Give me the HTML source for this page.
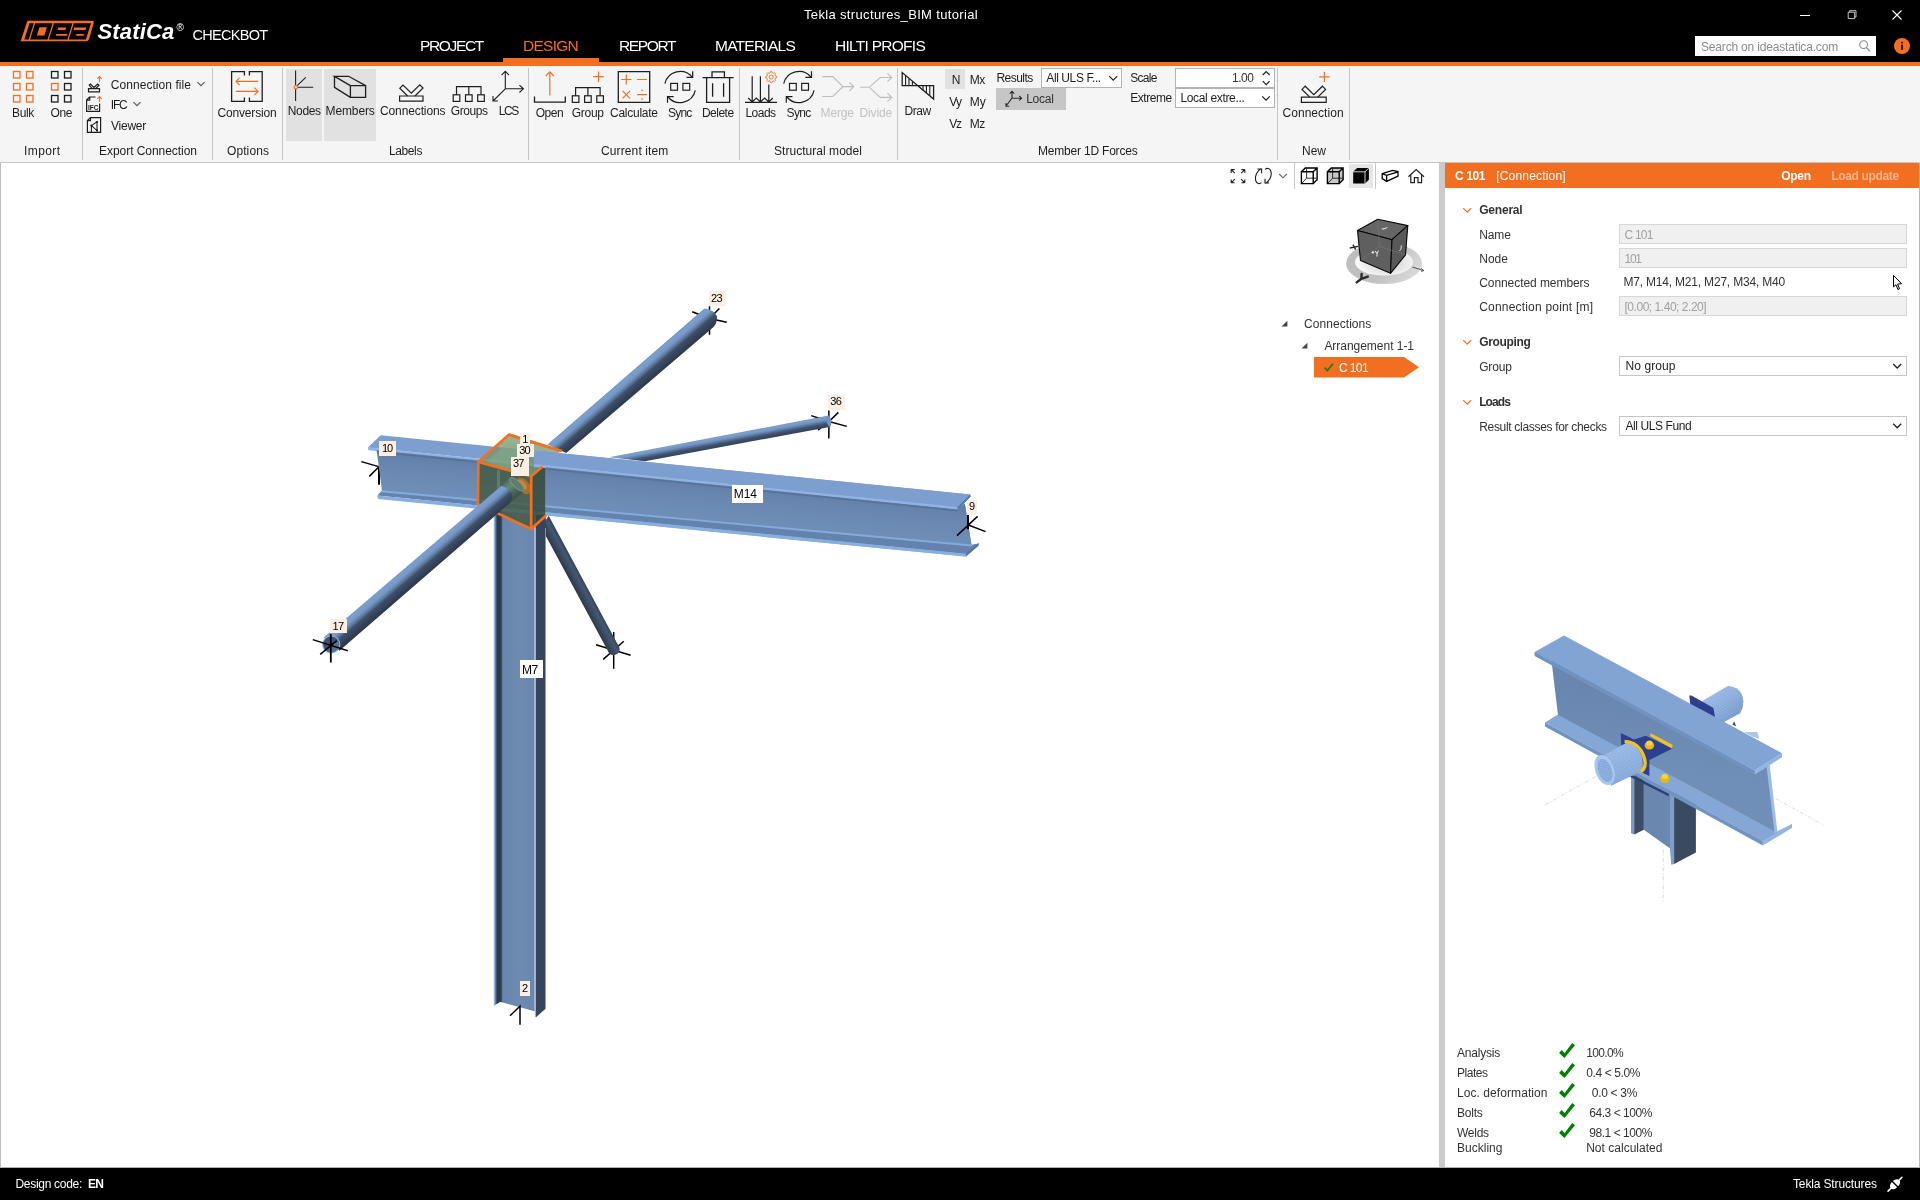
<!DOCTYPE html>
<html><head><meta charset="utf-8"><title>IDEA StatiCa Checkbot</title>
<style>
html,body{margin:0;padding:0;}
body{width:1920px;height:1200px;position:relative;overflow:hidden;background:#fff;font-family:"Liberation Sans",sans-serif;}
.abs{position:absolute;}
.t{position:absolute;white-space:pre;font-family:"Liberation Sans",sans-serif;}
</style></head>
<body>
<div id="root" style="position:absolute;left:0;top:0;width:1920px;height:1200px;will-change:transform">
<!-- header -->
<div class="abs" style="left:0;top:0;width:1920px;height:62px;background:#000"></div>
<div class="abs" style="left:0;top:62px;width:1920px;height:4px;background:#f26e21"></div>
<div class="abs" style="left:503px;top:58px;width:96px;height:5px;background:#f26e21"></div>
<span class="t" style="left:804.00px;top:7px;font-size:13px;line-height:15px;letter-spacing:0.345px;color:#ffffff;">Tekla structures_BIM tutorial</span>
<svg class="abs" style="left:0;top:0" width="300" height="62" viewBox="0 0 300 62">
<path d="M27.4,20.7 H92 Q94.4,20.7 93.7,23 L89,39.2 Q88.4,41.3 86.2,41.3 H20.6 Z" fill="#f26e21"/>
<polygon points="29.50,23.30 33.80,23.30 28.75,39.50 24.45,39.50" fill="#000"/>
<polygon points="35.10,23.30 52.60,23.30 47.55,39.50 30.05,39.50" fill="#000"/>
<polygon points="53.90,23.30 72.50,23.30 67.45,39.50 48.85,39.50" fill="#000"/>
<polygon points="73.80,23.30 91.00,23.30 85.95,39.50 68.75,39.50" fill="#000"/>
<polygon points="39.45,27.30 46.95,27.30 44.36,35.60 36.86,35.60" fill="#f26e21"/>
<polygon points="58.26,27.60 66.26,27.60 65.54,29.90 57.54,29.90" fill="#f26e21"/>
<polygon points="56.29,33.90 67.59,33.90 67.00,35.80 55.70,35.80" fill="#f26e21"/>
<polygon points="74.26,27.60 86.36,27.60 85.64,29.90 73.54,29.90" fill="#f26e21"/>
<polygon points="76.49,33.90 83.99,33.90 83.40,35.80 75.90,35.80" fill="#f26e21"/>
</svg>
<span class="t" style="left:97.50px;top:19px;font-size:22px;line-height:25px;letter-spacing:0.171px;color:#ffffff;font-weight:bold;font-style:italic;">StatiCa</span>
<span class="t" style="left:176.50px;top:22px;font-size:10px;line-height:11px;letter-spacing:0.632px;color:#ffffff;">®</span>
<span class="t" style="left:192.50px;top:27px;font-size:14.5px;line-height:16px;letter-spacing:-0.696px;color:#ffffff;">CHECKBOT</span>
<span class="t" style="left:420.00px;top:37px;font-size:15.5px;line-height:17px;letter-spacing:-1.334px;color:#fff;">PROJECT</span>
<span class="t" style="left:523.00px;top:37px;font-size:15.5px;line-height:17px;letter-spacing:-0.738px;color:#f26e21;">DESIGN</span>
<span class="t" style="left:619.00px;top:37px;font-size:15.5px;line-height:17px;letter-spacing:-1.385px;color:#fff;">REPORT</span>
<span class="t" style="left:715.00px;top:37px;font-size:15.5px;line-height:17px;letter-spacing:-0.745px;color:#fff;">MATERIALS</span>
<span class="t" style="left:835.00px;top:37px;font-size:15.5px;line-height:17px;letter-spacing:-0.729px;color:#fff;">HILTI PROFIS</span>
<div class="abs" style="left:1695px;top:36px;width:181px;height:20px;background:#fff"></div>
<span class="t" style="left:1701.00px;top:40px;font-size:12px;line-height:14px;letter-spacing:-0.177px;color:#8a8a8a;">Search on ideastatica.com</span>
<svg class="abs" style="left:1856px;top:38px" width="18" height="16" viewBox="0 0 18 16"><circle cx="7.6" cy="6.6" r="3.9" fill="none" stroke="#8a8a8a" stroke-width="1.1"/><path d="M10.4,9.6 L14,13.4" stroke="#8a8a8a" stroke-width="1.3" fill="none"/></svg>
<svg class="abs" style="left:1892px;top:36px" width="20" height="20" viewBox="0 0 20 20"><circle cx="10" cy="10" r="8" fill="#f26e21"/><rect x="9.2" y="8.6" width="1.7" height="5.2" fill="#1a0a00"/><rect x="9.2" y="5.8" width="1.7" height="1.7" fill="#1a0a00"/></svg>
<svg class="abs" style="left:1790px;top:0" width="130" height="30" viewBox="0 0 130 30">
<path d="M10,15.5 H20" stroke="#fff" stroke-width="1" fill="none"/>
<path d="M58.2,12.2 H64.6 V18.6 H58.2 Z M59.6,12.2 V10.7 H66 V17.1 H64.6" stroke="#d8d8d8" stroke-width="0.9" fill="none"/>
<path d="M102.5,10.5 L111.5,19.5 M111.5,10.5 L102.5,19.5" stroke="#fff" stroke-width="1.1" fill="none"/>
</svg>
<!-- ribbon -->
<div class="abs" style="left:0;top:66px;width:1920px;height:96px;background:#f5f5f5"></div>
<div class="abs" style="left:0;top:162px;width:1920px;height:1px;background:#c6c6c6"></div>
<div class="abs" style="left:82px;top:68px;width:1px;height:92px;background:#c4c4c4"></div>
<div class="abs" style="left:212px;top:68px;width:1px;height:92px;background:#c4c4c4"></div>
<div class="abs" style="left:282px;top:68px;width:1px;height:92px;background:#c4c4c4"></div>
<div class="abs" style="left:528px;top:68px;width:1px;height:92px;background:#c4c4c4"></div>
<div class="abs" style="left:739px;top:68px;width:1px;height:92px;background:#c4c4c4"></div>
<div class="abs" style="left:897px;top:68px;width:1px;height:92px;background:#c4c4c4"></div>
<div class="abs" style="left:1277px;top:68px;width:1px;height:92px;background:#c4c4c4"></div>
<div class="abs" style="left:1349px;top:68px;width:1px;height:92px;background:#c4c4c4"></div>
<div class="abs" style="left:286px;top:69px;width:36px;height:72px;background:#e1e1e1"></div>
<div class="abs" style="left:324px;top:69px;width:52px;height:72px;background:#e1e1e1"></div>
<div class="abs" style="left:945px;top:69px;width:20px;height:20px;background:#e1e1e1"></div>
<div class="abs" style="left:996px;top:88px;width:70px;height:22px;background:#c6c6c6"></div>
<div class="abs" style="left:1041px;top:68px;width:81px;height:20px;background:#fff;border:1px solid #b4b4b4;box-sizing:border-box"></div>
<div class="abs" style="left:1175px;top:68px;width:100px;height:20px;background:#fff;border:1px solid #b4b4b4;box-sizing:border-box"></div>
<div class="abs" style="left:1175px;top:88px;width:100px;height:20px;background:#fff;border:1px solid #b4b4b4;box-sizing:border-box"></div>
<svg class="abs" style="left:0;top:0" width="1400" height="163" viewBox="0 0 1400 163">
<rect x="13.50" y="71.50" width="6.50" height="6.50" fill="none" stroke="#f26e21" stroke-width="1.3"/>
<rect x="13.50" y="83.50" width="6.50" height="6.50" fill="none" stroke="#f26e21" stroke-width="1.3"/>
<rect x="13.50" y="95.50" width="6.50" height="6.50" fill="none" stroke="#f26e21" stroke-width="1.3"/>
<rect x="26.50" y="71.50" width="6.50" height="6.50" fill="none" stroke="#f26e21" stroke-width="1.3"/>
<rect x="26.50" y="83.50" width="6.50" height="6.50" fill="none" stroke="#f26e21" stroke-width="1.3"/>
<rect x="26.50" y="95.50" width="6.50" height="6.50" fill="none" stroke="#f26e21" stroke-width="1.3"/>
<rect x="51.50" y="71.50" width="6.50" height="6.50" fill="none" stroke="#1e1e1e" stroke-width="1.3"/>
<rect x="51.50" y="83.50" width="6.50" height="6.50" fill="none" stroke="#f26e21" stroke-width="1.3"/>
<rect x="51.50" y="95.50" width="6.50" height="6.50" fill="none" stroke="#1e1e1e" stroke-width="1.3"/>
<rect x="64.50" y="71.50" width="6.50" height="6.50" fill="none" stroke="#1e1e1e" stroke-width="1.3"/>
<rect x="64.50" y="83.50" width="6.50" height="6.50" fill="none" stroke="#1e1e1e" stroke-width="1.3"/>
<rect x="64.50" y="95.50" width="6.50" height="6.50" fill="none" stroke="#1e1e1e" stroke-width="1.3"/>
<path d="M88.5,88.6 H99.5 V91.8 H88.5 Z" fill="none" stroke="#1e1e1e" stroke-width="1.2" />
<path d="M89,85.2 L90.4,84 L94,87.4 L97.6,84 L99,85.2 L95.6,88.6 M89,85.2 L92.4,88.6" fill="none" stroke="#1e1e1e" stroke-width="1.2" />
<path d="M99.5,82.2 V76.6 M97.3,78.8 L99.5,76.6 L101.7,78.8" fill="none" stroke="#f26e21" stroke-width="1.1" />
<path d="M95.5,97 H89.5 L86.6,100 V111.4 H99.6 V103.5 M89.7,97.2 V100.2 H86.8" fill="none" stroke="#1e1e1e" stroke-width="1.2" />
<path d="M99.5,102 V96.6 M97.3,98.8 L99.5,96.6 L101.7,98.8" fill="none" stroke="#f26e21" stroke-width="1.1" />
<text x="88" y="109.8" font-family="Liberation Sans" font-weight="bold" font-size="7" fill="#1e1e1e" textLength="10.6" lengthAdjust="spacingAndGlyphs">IFC</text>
<path d="M90.4,117.6 H100.6 V132.4 H87.4 V120.6 Z M90.5,117.8 V120.7 H87.6" fill="none" stroke="#1e1e1e" stroke-width="1.2" />
<path d="M91.4,125.6 L97,121.8 V130.6 Z M91.4,125.6 V132" fill="none" stroke="#1e1e1e" stroke-width="1.1" />
<circle cx="91.4" cy="125.6" r="1.1" fill="#1e1e1e"/><circle cx="97" cy="122" r="1.1" fill="#1e1e1e"/><circle cx="97" cy="130.4" r="1.1" fill="#1e1e1e"/>
<path d="M197.4,82.2 L201,85.7 L204.6,82.2" fill="none" stroke="#555" stroke-width="1.1" />
<path d="M133.4,102.2 L137,105.7 L140.6,102.2" fill="none" stroke="#555" stroke-width="1.1" />
<path d="M244.4,75.6 V71.6 H231.6 V101.4 H244.4 V97.4" fill="none" stroke="#1e1e1e" stroke-width="1.3" />
<path d="M249.4,75.6 V71.6 H262.2 V101.4 H249.4 V97.4" fill="none" stroke="#1e1e1e" stroke-width="1.3" />
<path d="M258.2,81.4 H236 M239.6,77.6 L236,81.4 L239.6,85.2" fill="none" stroke="#f26e21" stroke-width="1.1" />
<path d="M235.8,91.4 H258 M254.4,87.6 L258,91.4 L254.4,95.2" fill="none" stroke="#f26e21" stroke-width="1.1" />
<path d="M295.6,70.4 V85.3 M295.6,89.1 V101 M297.6,87.2 H313.2 M297.2,85.6 L305.8,77.4" fill="none" stroke="#1e1e1e" stroke-width="1.1" />
<circle cx="295.8" cy="87.2" r="1.7" fill="none" stroke="#f26e21" stroke-width="1.1"/>
<path d="M350.4,85.6 H365.6 V97.4 H350.4 Z M350.4,85.6 L334.5,76.3 H348.6 L365.6,85.6 M334.5,76.3 V87.4 L350.4,97.4" fill="none" stroke="#1e1e1e" stroke-width="1.3" />
<path d="M399.6,96 H423 V101.2 H399.6 Z" fill="none" stroke="#1e1e1e" stroke-width="1.2" />
<path d="M407.6,96 L399.8,88.2 L403,85 L411.3,93.2 L419.8,84.8 L423,88 L415,96" fill="none" stroke="#1e1e1e" stroke-width="1.2" />
<rect x="453.20" y="94.80" width="6.60" height="6.60" fill="none" stroke="#1e1e1e" stroke-width="1.2"/><rect x="465.50" y="94.80" width="6.60" height="6.60" fill="none" stroke="#1e1e1e" stroke-width="1.2"/><rect x="477.70" y="94.80" width="6.60" height="6.60" fill="none" stroke="#1e1e1e" stroke-width="1.2"/><path d="M456.5,94.8 V86.6 H481.0 V94.8 M468.8,86.6 V94.8" fill="none" stroke="#1e1e1e" stroke-width="1.2" />
<path d="M505.3,88.8 V71.4 M501.6,75.2 L505.3,71.2 L509,75.2 M505.3,88.8 H523.2 M519.4,85.1 L523.4,88.8 L519.4,92.5 M505.3,88.8 L493,101 M493,96 V101 H498" fill="none" stroke="#1e1e1e" stroke-width="1.1" />
<path d="M534.5,96.4 V102.2 H565.3 V96.4" fill="none" stroke="#1e1e1e" stroke-width="1.3" />
<path d="M549.8,95.6 V72 M545.8,76 L549.8,71.8 L553.8,76" fill="none" stroke="#f26e21" stroke-width="1.2" />
<rect x="572.30" y="95.80" width="6.60" height="6.60" fill="none" stroke="#1e1e1e" stroke-width="1.2"/><rect x="584.60" y="95.80" width="6.60" height="6.60" fill="none" stroke="#1e1e1e" stroke-width="1.2"/><rect x="596.80" y="95.80" width="6.60" height="6.60" fill="none" stroke="#1e1e1e" stroke-width="1.2"/><path d="M575.6,95.8 V87.6 H600.1 V95.8 M587.9,87.6 V95.8" fill="none" stroke="#1e1e1e" stroke-width="1.2" />
<path d="M593.2,76.7 H603.8 M598.5,71.4 V82" fill="none" stroke="#f26e21" stroke-width="1.2" />
<path d="M618.3,71.6 H649.7 V102.3 H618.3 Z" fill="none" stroke="#1e1e1e" stroke-width="1.3" />
<path d="M621.2,79.5 H631.4 M626.3,74.4 V84.6 M637,79.5 H647 M622.6,90.8 L630,98.4 M630,90.8 L622.6,98.4 M637,94.6 H647" fill="none" stroke="#f26e21" stroke-width="1.2" />
<rect x="641.3" y="89.6" width="1.5" height="1.5" fill="#f26e21"/><rect x="641.3" y="98.2" width="1.5" height="1.5" fill="#f26e21"/>
<path d="M664.90,83.60 A15.60,15.60 0 0 1 692.10,77.00" fill="none" stroke="#1e1e1e" stroke-width="1.2" /><path d="M692.70,71.20 V77.40 H686.50" fill="none" stroke="#1e1e1e" stroke-width="1.2" /><path d="M695.30,90.40 A15.60,15.60 0 0 1 668.10,97.00" fill="none" stroke="#1e1e1e" stroke-width="1.2" /><path d="M667.50,102.80 V96.60 H673.70" fill="none" stroke="#1e1e1e" stroke-width="1.2" /><rect x="670.70" y="83.40" width="6.80" height="6.80" fill="none" stroke="#1e1e1e" stroke-width="1.2"/><rect x="682.90" y="83.40" width="6.80" height="6.80" fill="none" stroke="#1e1e1e" stroke-width="1.2"/>
<path d="M702.6,77.6 H733.6 M712,77.6 V71.8 H724.4 V77.6 M706.6,77.6 V102.3 H729.6 V77.6 M712.6,83.2 V96.8 M723.6,83.2 V96.8" fill="none" stroke="#1e1e1e" stroke-width="1.3" />
<path d="M745,102.4 H777 M752.2,76.2 V102 M760.4,76.2 V102 M768.8,84.4 V102 M748.2,98 L752.2,102 L756.3,98 L760.4,102 L764.6,98 L768.8,102 L772.8,98" fill="none" stroke="#1e1e1e" stroke-width="1.2" />
<polygon points="770.59,71.53 771.81,71.53 772.40,72.97 773.27,73.33 774.70,72.73 775.57,73.60 774.97,75.03 775.33,75.90 776.77,76.49 776.77,77.71 775.33,78.30 774.97,79.17 775.57,80.60 774.70,81.47 773.27,80.87 772.40,81.23 771.81,82.67 770.59,82.67 770.00,81.23 769.13,80.87 767.70,81.47 766.83,80.60 767.43,79.17 767.07,78.30 765.63,77.71 765.63,76.49 767.07,75.90 767.43,75.03 766.83,73.60 767.70,72.73 769.13,73.33 770.00,72.97" fill="none" stroke="#f26e21" stroke-width="0.9"/>
<circle cx="771.2" cy="77.1" r="2" fill="none" stroke="#f26e21" stroke-width="0.9"/>
<path d="M783.70,83.60 A15.60,15.60 0 0 1 810.90,77.00" fill="none" stroke="#1e1e1e" stroke-width="1.2" /><path d="M811.50,71.20 V77.40 H805.30" fill="none" stroke="#1e1e1e" stroke-width="1.2" /><path d="M814.10,90.40 A15.60,15.60 0 0 1 786.90,97.00" fill="none" stroke="#1e1e1e" stroke-width="1.2" /><path d="M786.30,102.80 V96.60 H792.50" fill="none" stroke="#1e1e1e" stroke-width="1.2" /><rect x="789.50" y="83.40" width="6.80" height="6.80" fill="none" stroke="#1e1e1e" stroke-width="1.2"/><rect x="801.70" y="83.40" width="6.80" height="6.80" fill="none" stroke="#1e1e1e" stroke-width="1.2"/>
<path d="M822.2,76.6 H832.8 L842.9,86.6 M822.2,96.5 H832.8 L842.9,86.6 H853.6 M849.4,82.4 L853.8,86.6 L849.4,90.8" fill="none" stroke="#bdbdbd" stroke-width="1.1" />
<path d="M860.2,87.3 H869.4 L880.2,77.5 H891.6 M887.4,73.3 L891.8,77.5 L887.4,81.7 M869.4,87.3 L880.2,97.4 H891.6 M887.4,93.2 L891.8,97.4 L887.4,101.6" fill="none" stroke="#bdbdbd" stroke-width="1.1" />
<path d="M902.2,72.6 V85.6 H933.6 V99 L902.2,72.6 Z" fill="none" stroke="#1e1e1e" stroke-width="1.3" />
<path d="M905.6,76 V85.4 M909,79 V85.4 M912.4,82 V85.4 M923,90.4 V85.8 M926.4,93.2 V85.8 M929.8,96 V85.8" fill="none" stroke="#1e1e1e" stroke-width="1.1" />
<path d="M1012,98.2 V91.4 M1009.8,93.6 L1012,91.2 L1014.2,93.6 M1012,98.2 H1021.4 M1019.2,96 L1021.6,98.2 L1019.2,100.4 M1012,98.2 L1006,106 M1006,103 V106.2 H1009.2" fill="none" stroke="#2a2a2a" stroke-width="1.1" />
<path d="M1109.2,76.2 L1113.2,80.2 L1117.2,76.2" fill="none" stroke="#1e1e1e" stroke-width="1.2" />
<path d="M1262.2,96.4 L1266,100.2 L1269.8,96.4" fill="none" stroke="#1e1e1e" stroke-width="1.2" />
<path d="M1262.8,75 L1266.2,71.6 L1269.6,75 M1262.8,81.2 L1266.2,84.6 L1269.6,81.2" fill="none" stroke="#1e1e1e" stroke-width="1.2" />
<path d="M1301.4,97.2 H1326.2 V102.4 H1301.4 Z" fill="none" stroke="#1e1e1e" stroke-width="1.2" />
<path d="M1309.8,97.2 L1302,89.4 L1305.2,86.2 L1313.8,94.6 L1322.4,86.2 L1325.6,89.4 L1317.8,97.2" fill="none" stroke="#1e1e1e" stroke-width="1.2" />
<path d="M1319.2,76.9 H1329.6 M1324.4,71.7 V82.1" fill="none" stroke="#f26e21" stroke-width="1.2" />
</svg>
<span class="t" style="left:12.00px;top:106px;font-size:12px;line-height:14px;letter-spacing:-0.336px;color:#1e1e1e;">Bulk</span>
<span class="t" style="left:50.50px;top:106px;font-size:12px;line-height:14px;letter-spacing:-0.394px;color:#1e1e1e;">One</span>
<span class="t" style="left:24.00px;top:144px;font-size:12px;line-height:14px;letter-spacing:0.415px;color:#1e1e1e;">Import</span>
<span class="t" style="left:110.80px;top:78px;font-size:12px;line-height:14px;letter-spacing:0.054px;color:#1e1e1e;">Connection file</span>
<span class="t" style="left:110.80px;top:98px;font-size:12px;line-height:14px;letter-spacing:-1.210px;color:#1e1e1e;">IFC</span>
<span class="t" style="left:111.00px;top:119px;font-size:12px;line-height:14px;letter-spacing:-0.244px;color:#1e1e1e;">Viewer</span>
<span class="t" style="left:99.00px;top:144px;font-size:12px;line-height:14px;letter-spacing:-0.043px;color:#1e1e1e;">Export Connection</span>
<span class="t" style="left:217.60px;top:106px;font-size:12px;line-height:14px;letter-spacing:-0.190px;color:#1e1e1e;">Conversion</span>
<span class="t" style="left:227.00px;top:144px;font-size:12px;line-height:14px;letter-spacing:0.092px;color:#1e1e1e;">Options</span>
<span class="t" style="left:287.80px;top:104px;font-size:12px;line-height:14px;letter-spacing:-0.378px;color:#1e1e1e;">Nodes</span>
<span class="t" style="left:325.60px;top:104px;font-size:12px;line-height:14px;letter-spacing:-0.130px;color:#1e1e1e;">Members</span>
<span class="t" style="left:380.00px;top:104px;font-size:12px;line-height:14px;letter-spacing:-0.119px;color:#1e1e1e;">Connections</span>
<span class="t" style="left:450.80px;top:104px;font-size:12px;line-height:14px;letter-spacing:-0.409px;color:#1e1e1e;">Groups</span>
<span class="t" style="left:498.80px;top:104px;font-size:12px;line-height:14px;letter-spacing:-1.382px;color:#1e1e1e;">LCS</span>
<span class="t" style="left:389.00px;top:144px;font-size:12px;line-height:14px;letter-spacing:-0.394px;color:#1e1e1e;">Labels</span>
<span class="t" style="left:535.70px;top:106px;font-size:12px;line-height:14px;letter-spacing:-0.464px;color:#1e1e1e;">Open</span>
<span class="t" style="left:571.80px;top:106px;font-size:12px;line-height:14px;letter-spacing:-0.290px;color:#1e1e1e;">Group</span>
<span class="t" style="left:610.00px;top:106px;font-size:12px;line-height:14px;letter-spacing:-0.248px;color:#1e1e1e;">Calculate</span>
<span class="t" style="left:667.90px;top:106px;font-size:12px;line-height:14px;letter-spacing:-0.745px;color:#1e1e1e;">Sync</span>
<span class="t" style="left:701.90px;top:106px;font-size:12px;line-height:14px;letter-spacing:-0.498px;color:#1e1e1e;">Delete</span>
<span class="t" style="left:601.00px;top:144px;font-size:12px;line-height:14px;letter-spacing:0.123px;color:#1e1e1e;">Current item</span>
<span class="t" style="left:745.40px;top:106px;font-size:12px;line-height:14px;letter-spacing:-0.499px;color:#1e1e1e;">Loads</span>
<span class="t" style="left:786.50px;top:106px;font-size:12px;line-height:14px;letter-spacing:-0.620px;color:#1e1e1e;">Sync</span>
<span class="t" style="left:774.00px;top:144px;font-size:12px;line-height:14px;letter-spacing:0.039px;color:#1e1e1e;">Structural model</span>
<span class="t" style="left:904.60px;top:104px;font-size:12px;line-height:14px;letter-spacing:-0.501px;color:#1e1e1e;">Draw</span>
<span class="t" style="left:951.70px;top:73px;font-size:12px;line-height:14px;letter-spacing:-0.966px;color:#1e1e1e;">N</span>
<span class="t" style="left:969.80px;top:73px;font-size:12px;line-height:14px;letter-spacing:-0.548px;color:#1e1e1e;">Mx</span>
<span class="t" style="left:949.20px;top:95px;font-size:12px;line-height:14px;letter-spacing:-0.680px;color:#1e1e1e;">Vy</span>
<span class="t" style="left:969.80px;top:95px;font-size:12px;line-height:14px;letter-spacing:0.002px;color:#1e1e1e;">My</span>
<span class="t" style="left:949.20px;top:117px;font-size:12px;line-height:14px;letter-spacing:-1.252px;color:#1e1e1e;">Vz</span>
<span class="t" style="left:969.80px;top:117px;font-size:12px;line-height:14px;letter-spacing:-0.548px;color:#1e1e1e;">Mz</span>
<span class="t" style="left:996.40px;top:71px;font-size:12px;line-height:14px;letter-spacing:-0.516px;color:#1e1e1e;">Results</span>
<span class="t" style="left:1046.30px;top:71px;font-size:12px;line-height:14px;letter-spacing:-0.404px;color:#1e1e1e;">All ULS F...</span>
<span class="t" style="left:1130.30px;top:71px;font-size:12px;line-height:14px;letter-spacing:-0.724px;color:#1e1e1e;">Scale</span>
<span class="t" style="left:1130.30px;top:91px;font-size:12px;line-height:14px;letter-spacing:-0.468px;color:#1e1e1e;">Extreme</span>
<span class="t" style="left:1180.40px;top:91px;font-size:12px;line-height:14px;letter-spacing:-0.336px;color:#1e1e1e;">Local extre...</span>
<span class="t" style="left:1038.00px;top:144px;font-size:12px;line-height:14px;letter-spacing:-0.200px;color:#1e1e1e;">Member 1D Forces</span>
<span class="t" style="left:1282.50px;top:106px;font-size:12px;line-height:14px;letter-spacing:0.039px;color:#1e1e1e;">Connection</span>
<span class="t" style="left:1302.00px;top:144px;font-size:12px;line-height:14px;letter-spacing:-0.002px;color:#1e1e1e;">New</span>
<span class="t" style="left:820.60px;top:106px;font-size:12px;line-height:14px;letter-spacing:-0.163px;color:#c2c2c2;">Merge</span>
<span class="t" style="left:859.60px;top:106px;font-size:12px;line-height:14px;letter-spacing:-0.158px;color:#c2c2c2;">Divide</span>
<span class="t" style="left:1231.90px;top:71px;font-size:12px;line-height:14px;letter-spacing:-0.414px;color:#333;">1.00</span>
<span class="t" style="left:1026.20px;top:92px;font-size:12px;line-height:14px;letter-spacing:-0.258px;color:#333;">Local</span>
<!-- view -->
<div class="abs" style="left:0;top:163px;width:1px;height:1004px;background:#bdbdbd"></div>
<svg class="abs" style="left:0;top:163px" width="1438" height="1004" viewBox="0 163 1438 1004">
<defs><linearGradient id="g2" gradientUnits="userSpaceOnUse" x1="718.8" y1="436.4" x2="720.8" y2="447.1"><stop offset="0" stop-color="#7396c5"/><stop offset="0.1" stop-color="#7b9fce"/><stop offset="0.3" stop-color="#7395c2"/><stop offset="0.5" stop-color="#58739a"/><stop offset="0.68" stop-color="#40526c"/><stop offset="1" stop-color="#33425a"/></linearGradient>
<linearGradient id="g1" gradientUnits="userSpaceOnUse" x1="626.0" y1="376.6" x2="638.5" y2="391.1"><stop offset="0" stop-color="#7194c3"/><stop offset="0.08" stop-color="#7b9fce"/><stop offset="0.28" stop-color="#7698c6"/><stop offset="0.45" stop-color="#5a7699"/><stop offset="0.58" stop-color="#3e4f68"/><stop offset="0.8" stop-color="#34435a"/><stop offset="1" stop-color="#2c384b"/></linearGradient>
<linearGradient id="g4" gradientUnits="userSpaceOnUse" x1="584.0" y1="581.7" x2="573.6" y2="587.3"><stop offset="0" stop-color="#33445a"/><stop offset="0.3" stop-color="#435872"/><stop offset="0.6" stop-color="#3b4b62"/><stop offset="1" stop-color="#2c394b"/></linearGradient>
<linearGradient id="cl" x1="0" y1="0" x2="1" y2="0"><stop offset="0" stop-color="#7596c4"/><stop offset="0.18" stop-color="#5d7a9e"/><stop offset="0.32" stop-color="#2b3748"/><stop offset="0.78" stop-color="#303d50"/><stop offset="0.93" stop-color="#56708f"/><stop offset="1" stop-color="#6a87ae"/></linearGradient>
<linearGradient id="cw" x1="0" y1="0" x2="1" y2="0"><stop offset="0" stop-color="#6885ad"/><stop offset="0.5" stop-color="#6d8ab1"/><stop offset="1" stop-color="#6a87ae"/></linearGradient>
<linearGradient id="wb" gradientUnits="userSpaceOnUse" x1="600" y1="470" x2="596" y2="512"><stop offset="0" stop-color="#5f7ca5"/><stop offset="0.25" stop-color="#6784ae"/><stop offset="0.7" stop-color="#6c8bb5"/><stop offset="1" stop-color="#6f8fba"/></linearGradient>
<clipPath id="cpR"><rect x="534" y="380" width="500" height="200"/></clipPath>
<clipPath id="cpR2"><rect x="545.4" y="380" width="500" height="200"/></clipPath>
<linearGradient id="g5" gradientUnits="userSpaceOnUse" x1="505.6" y1="481.9" x2="518.3" y2="496.0"><stop offset="0" stop-color="#4f6e62"/><stop offset="0.3" stop-color="#678a78"/><stop offset="0.7" stop-color="#4a6656"/><stop offset="1" stop-color="#3a5146"/></linearGradient>
<linearGradient id="g3" gradientUnits="userSpaceOnUse" x1="412.6" y1="561.7" x2="425.2" y2="576.4"><stop offset="0" stop-color="#7194c3"/><stop offset="0.08" stop-color="#7b9fce"/><stop offset="0.28" stop-color="#7698c6"/><stop offset="0.45" stop-color="#5a7699"/><stop offset="0.58" stop-color="#3e4f68"/><stop offset="0.8" stop-color="#34435a"/><stop offset="1" stop-color="#2c384b"/></linearGradient></defs>
<polyline points="692.2,311.7 709.5,318.5" fill="none" stroke="#000" stroke-width="1.5" />
<polyline points="709.5,306.3 709.5,318.5" fill="none" stroke="#000" stroke-width="1.5" />
<polyline points="719.4,308.5 709.5,318.5" fill="none" stroke="#000" stroke-width="1.5" />
<polyline points="726.8,322.3 709.5,318.5" fill="none" stroke="#000" stroke-width="1.5" />
<polyline points="709.5,334.8 709.5,318.5" fill="none" stroke="#000" stroke-width="1.5" />
<polyline points="828.8,410.6 829.0,421.5" fill="none" stroke="#000" stroke-width="1.5" />
<polyline points="838.4,412.4 829.0,421.5" fill="none" stroke="#000" stroke-width="1.5" />
<polyline points="846.8,426.4 829.0,421.5" fill="none" stroke="#000" stroke-width="1.5" />
<polyline points="828.8,438.4 829.0,421.5" fill="none" stroke="#000" stroke-width="1.5" />
<polyline points="818.0,430.2 829.0,421.5" fill="none" stroke="#000" stroke-width="1.5" />
<polyline points="811.2,415.6 829.0,421.5" fill="none" stroke="#000" stroke-width="1.5" />
<polygon points="609.0,457.2 828.6,415.6 829.4,426.9 645.0,461.2" fill="url(#g2)" />
<ellipse cx="829" cy="421.3" rx="2.2" ry="5.6" fill="#6f92c2" transform="rotate(-8 829 421.3)"/>
<path d="M547.5,444.5 L704.4,308.6 Q714,309.5 717,316.4 Q718,324.5 709.7,330.3 L709.7,330.3 L566.2,452.9 Z" fill="url(#g1)"/>
<polyline points="613.7,632.0 613.7,668.8" fill="none" stroke="#000" stroke-width="1.5" />
<polyline points="596.0,644.7 630.6,655.3" fill="none" stroke="#000" stroke-width="1.5" />
<polyline points="603.2,659.4 623.8,641.2" fill="none" stroke="#000" stroke-width="1.5" />
<path d="M548.7,515.7 L619.4,647.6 Q621,653.5 614.5,655 Q609.5,655 608.6,652.2 L608.6,652.2 L541.0,527.0 Z" fill="url(#g4)"/>
<polygon points="494.3,505.0 503.0,505.0 503.0,1002.6 500.0,1002.0 494.3,1005.6" fill="url(#cl)" />
<polygon points="493.8,505.0 494.6,505.0 494.6,1005.4 493.8,1005.8" fill="#8fb6ec" />
<polygon points="502.6,505.0 534.6,505.0 534.6,1011.2 502.6,1002.4" fill="url(#cw)" />
<polygon points="534.9,505.0 536.0,505.0 536.0,1017.3 534.9,1017.1" fill="#8cb3ea" />
<polygon points="536.0,505.0 545.8,505.0 545.8,1008.6 536.0,1017.2" fill="#35455c" />
<polygon points="545.2,528.0 545.9,528.0 545.9,1008.6 545.2,1009.2" fill="#8cb3ea" />
<polyline points="510.0,1015.8 520.0,1006.2 520.0,1024.8" fill="none" stroke="#000" stroke-width="1.5" />
<polyline points="361.3,461.6 378.7,466.6" fill="none" stroke="#000" stroke-width="1.5" />
<polyline points="369.3,476.4 378.7,467.0" fill="none" stroke="#000" stroke-width="1.5" />
<polyline points="379.0,466.6 379.0,484.8" fill="none" stroke="#000" stroke-width="2" />
<polygon points="380.7,435.2 970.2,494.4 957.2,507.2 367.8,447.4" fill="#7c9fcf" />
<polygon points="367.8,447.2 957.2,507.0 957.4,509.6 368.4,450.2" fill="#8fb3e4" />
<polygon points="376.6,450.2 957.4,509.4 964.8,503.4 971.6,545.4 382.0,491.0" fill="url(#wb)" />
<polygon points="376.8,451.0 957.4,509.8 957.4,511.4 377.0,452.8" fill="#506b8c" opacity="0.6"/>
<polygon points="957.2,507.2 970.2,494.4 970.6,496.6 958.0,509.6" fill="#5d7ba6" />
<polygon points="382.0,490.6 971.6,545.0 978.6,543.4 966.0,554.0 377.3,495.6" fill="#6383ae" />
<polygon points="382.0,490.2 971.6,544.6 971.6,546.4 381.0,492.2" fill="#86abd9" />
<polygon points="377.3,495.4 966.0,553.8 965.6,556.6 378.0,499.0" fill="#88aee0" />
<polygon points="966.0,553.8 978.6,543.2 978.6,545.6 965.8,556.6" fill="#587399" />
<polygon points="478.4,461.9 509.1,434.6 560.9,450.9 531.2,476.3" fill="#6f9468" opacity="0.72"/>
<polygon points="478.4,461.9 531.2,476.3 531.2,529.0 477.9,504.1" fill="#41593f" opacity="0.80"/>
<polygon points="531.2,476.3 545.4,464.6 545.5,516.1 531.2,529.0" fill="#35493a" opacity="0.85"/>
<polygon points="486.0,462.0 509.0,441.0 531.0,449.0 508.0,470.0" fill="#88ad8c" opacity="0.5"/>
<polygon points="497.0,470.0 500.0,470.0 500.0,510.0 497.0,509.0" fill="#6f9685" opacity="0.5"/>
<ellipse cx="523.5" cy="486" rx="6" ry="9.6" fill="#a86f2c" transform="rotate(-40 523.5 486)"/>
<ellipse cx="522.4" cy="484.6" rx="3.2" ry="6" fill="#c98634" transform="rotate(-40 522.4 484.6)"/>
<g clip-path="url(#cpR)"><polygon points="380.7,435.2 970.2,494.4 957.2,507.2 367.8,447.4" fill="#7c9fcf" /><polygon points="367.8,447.2 957.2,507.0 957.4,509.6 368.4,450.2" fill="#8fb3e4" /></g>
<g clip-path="url(#cpR2)"><polygon points="376.6,450.2 957.4,509.4 964.8,503.4 971.6,545.4 382.0,491.0" fill="url(#wb)" /><polygon points="376.8,451.0 957.4,509.8 957.4,511.4 377.0,452.8" fill="#506b8c" opacity="0.6"/><polygon points="957.2,507.2 970.2,494.4 970.6,496.6 958.0,509.6" fill="#5d7ba6" /><polygon points="382.0,490.6 971.6,545.0 978.6,543.4 966.0,554.0 377.3,495.6" fill="#6383ae" /><polygon points="382.0,490.2 971.6,544.6 971.6,546.4 381.0,492.2" fill="#86abd9" /><polygon points="377.3,495.4 966.0,553.8 965.6,556.6 378.0,499.0" fill="#88aee0" /><polygon points="966.0,553.8 978.6,543.2 978.6,545.6 965.8,556.6" fill="#587399" /></g>
<polyline points="968.0,515.0 968.0,529.2" fill="none" stroke="#000" stroke-width="2" />
<polyline points="957.0,535.6 977.6,516.4" fill="none" stroke="#000" stroke-width="1.5" />
<polyline points="968.4,525.0 985.6,531.6" fill="none" stroke="#000" stroke-width="1.5" />
<polyline points="478.4,461.9 509.1,434.6 560.9,450.9" fill="none" stroke="#f46f20" stroke-width="2.7" stroke-linejoin="round" stroke-linecap="round"/>
<polyline points="478.4,461.9 531.2,476.3 541.7,467.2" fill="none" stroke="#f46f20" stroke-width="2.7" stroke-linejoin="round" stroke-linecap="round"/>
<polyline points="478.4,461.9 477.9,504.1 531.2,529.0 545.5,516.1" fill="none" stroke="#f46f20" stroke-width="2.7" stroke-linejoin="round" stroke-linecap="round"/>
<polyline points="531.2,476.3 531.2,529.0" fill="none" stroke="#f46f20" stroke-width="2.7" stroke-linejoin="round" stroke-linecap="round"/>
<polygon points="500.6,486.4 510.6,477.4 523.4,491.6 508.0,505.0" fill="url(#g5)" />
<ellipse cx="517" cy="484.4" rx="3.4" ry="9.4" fill="#5b7d6c" stroke="#7da391" stroke-width="0.8" transform="rotate(-47 517 484.4)"/>
<path d="M323.8,637.6 L501.3,485.8 Q510.6,488.6 512.4,495.4 Q512.6,501 506.8,505.6 L506.8,505.6 L339.4,650.8 Z" fill="url(#g3)"/>
<circle cx="331.2" cy="644.4" r="9.1" fill="#8db4ea"/>
<circle cx="331.2" cy="644.4" r="8" fill="#3f5069"/>
<path d="M337.6,639.6 A8,8 0 0 1 327,651.2 L331.2,644.4 Z" fill="#56708f"/>
<polyline points="312.8,639.6 347.8,650.8" fill="none" stroke="#000" stroke-width="1.5" />
<polyline points="320.2,654.4 336.8,640.6" fill="none" stroke="#000" stroke-width="1.5" />
<polyline points="330.8,634.2 330.8,662.6" fill="none" stroke="#000" stroke-width="1.8" />
</svg>
<div class="abs" style="left:709.2px;top:290.8px;width:16.6px;height:15.0px;background:#fbeee2"></div>
<span class="t" style="left:711.00px;top:292px;font-size:11px;line-height:12px;letter-spacing:-0.518px;color:#000;">23</span>
<div class="abs" style="left:828.0px;top:395.0px;width:17.0px;height:14.8px;background:#fbeee2"></div>
<span class="t" style="left:830.30px;top:395px;font-size:11px;line-height:12px;letter-spacing:-0.618px;color:#000;">36</span>
<div class="abs" style="left:378.9px;top:441.0px;width:17.1px;height:15.0px;background:#fbeee2"></div>
<span class="t" style="left:382.00px;top:442px;font-size:11px;line-height:12px;letter-spacing:-1.018px;color:#000;">10</span>
<div class="abs" style="left:520.1px;top:433.1px;width:10.1px;height:11.3px;background:#fbeee2"></div>
<span class="t" style="left:522.20px;top:433px;font-size:11px;line-height:12px;letter-spacing:-2.518px;color:#000;">1</span>
<div class="abs" style="left:517.3px;top:444.2px;width:16.5px;height:13.1px;background:#fbeee2"></div>
<span class="t" style="left:519.20px;top:444px;font-size:11px;line-height:12px;letter-spacing:-0.718px;color:#000;">30</span>
<div class="abs" style="left:511.3px;top:457.1px;width:18.1px;height:18.7px;background:#fbeee2"></div>
<span class="t" style="left:512.90px;top:457px;font-size:11px;line-height:12px;letter-spacing:-0.768px;color:#000;">37</span>
<div class="abs" style="left:967.0px;top:500.0px;width:10.0px;height:14.8px;background:#fbeee2"></div>
<span class="t" style="left:969.00px;top:500px;font-size:11px;line-height:12px;letter-spacing:-0.918px;color:#000;">9</span>
<div class="abs" style="left:330.3px;top:619.1px;width:16.5px;height:14.2px;background:#fbeee2"></div>
<span class="t" style="left:332.60px;top:620px;font-size:11px;line-height:12px;letter-spacing:-0.618px;color:#000;">17</span>
<div class="abs" style="left:520.0px;top:981.0px;width:10.0px;height:15.0px;background:#fbeee2"></div>
<span class="t" style="left:521.90px;top:982px;font-size:11px;line-height:12px;letter-spacing:-0.718px;color:#000;">2</span>
<div class="abs" style="left:731.9px;top:485.1px;width:31.2px;height:17.9px;background:#fff"></div>
<span class="t" style="left:733.70px;top:487px;font-size:12px;line-height:14px;letter-spacing:-0.015px;color:#000;">M14</span>
<div class="abs" style="left:519.7px;top:659.6px;width:23.0px;height:18.6px;background:#fff"></div>
<span class="t" style="left:521.90px;top:663px;font-size:12px;line-height:14px;letter-spacing:-0.335px;color:#000;">M7</span>
<div class="abs" style="left:1349px;top:164px;width:24px;height:24px;background:#e6e6e6"></div>
<div class="abs" style="left:1294px;top:163px;width:1px;height:26px;background:#c8c8c8"></div>
<div class="abs" style="left:1375px;top:163px;width:1px;height:26px;background:#c8c8c8"></div>
<svg class="abs" style="left:1220px;top:163px" width="218" height="30" viewBox="1220 163 218 30"><path d="M1234.8,173.2 L1231.2,169.6 M1231.2,169.6 H1234.6 M1231.2,169.6 V173.0" fill="none" stroke="#1e1e1e" stroke-width="1.1" />
<path d="M1241.2,173.2 L1244.8,169.6 M1244.8,169.6 H1241.4 M1244.8,169.6 V173.0" fill="none" stroke="#1e1e1e" stroke-width="1.1" />
<path d="M1234.8,179.2 L1231.2,182.8 M1231.2,182.8 H1234.6 M1231.2,182.8 V179.4" fill="none" stroke="#1e1e1e" stroke-width="1.1" />
<path d="M1241.2,179.2 L1244.8,182.8 M1244.8,182.8 H1241.4 M1244.8,182.8 V179.4" fill="none" stroke="#1e1e1e" stroke-width="1.1" />
<path d="M1261.2,168.6 C1257,171 1254.6,176 1255.6,180.4 C1256.6,184.4 1260,184 1261.4,182.6 M1257.4,169 H1261.6 V173.2" fill="none" stroke="#1e1e1e" stroke-width="1.1" />
<path d="M1265.4,183.4 C1269.6,181 1272,176 1271,171.6 C1270,167.6 1266.6,168 1265.2,169.4 M1269.2,183 H1265 V178.8" fill="none" stroke="#1e1e1e" stroke-width="1.1" />
<path d="M1279.2,174 L1283,177.8 L1286.8,174" fill="none" stroke="#666" stroke-width="1.1" />
<path d="M1301.4,171.8 H1313.2 V183.6 H1301.4 Z M1301.4,171.8 L1305.3,168.0 H1317.1 V179.8 L1313.2,183.6 M1313.2,171.8 L1317.1,168.0" fill="none" stroke="#000" stroke-width="1.4" /><path d="M1306.6,168.6 V178.2 M1306.6,178.2 H1316.5 M1306.6,178.2 L1301.9,183.1" fill="none" stroke="#000" stroke-width="0.8" />
<polygon points="1327.4,171.8 1331.3,168.0 1343.1,168.0 1343.1,179.8 1339.2,183.6 1327.4,183.6" fill="#c8c8c8"/><path d="M1327.4,171.8 H1339.2 V183.6 H1327.4 Z M1327.4,171.8 L1331.3,168.0 H1343.1 V179.8 L1339.2,183.6 M1339.2,171.8 L1343.1,168.0" fill="none" stroke="#000" stroke-width="1.4" /><path d="M1332.6,168.6 V178.2 M1332.6,178.2 H1342.5 M1332.6,178.2 L1327.9,183.1" fill="none" stroke="#000" stroke-width="0.8" />
<polygon points="1353.2,171.8 1357.1,168.0 1368.9,168.0 1368.9,179.8 1365.0,183.6 1353.2,183.6" fill="#000"/><path d="M1353.2,171.8 H1365.0 L1368.9,168.0 M1365.0,171.8 V183.6" fill="none" stroke="#e6e6e6" stroke-width="0.9" />
<path d="M1382.2,173.6 L1392.6,170.4 L1398,171.6 V176 L1386.6,181.4 L1382.2,178.6 Z M1382.2,173.6 L1386.6,175.4 L1398,171.8 M1386.6,175.4 V181.2" fill="none" stroke="#000" stroke-width="1.3" />
<path d="M1408.4,176.8 L1416.2,169.6 L1424,176.8 M1410.8,175.2 V182.6 H1414.4 V177.6 H1418 V182.6 H1421.6 V175.2" fill="none" stroke="#222" stroke-width="1.2" /></svg>
<svg class="abs" style="left:1340px;top:210px" width="95" height="80" viewBox="1340 210 95 80"><defs><linearGradient id="rfade" x1="0" y1="0.3" x2="1" y2="0.7"><stop offset="0" stop-color="#bdbdbd"/><stop offset="0.55" stop-color="#c2c2c2"/><stop offset="1" stop-color="#dcdcdc"/></linearGradient><radialGradient id="rsh" cx="0.55" cy="0.55" r="0.6"><stop offset="0" stop-color="#c8c8c8"/><stop offset="0.55" stop-color="#e8e8e8"/><stop offset="1" stop-color="#ffffff"/></radialGradient></defs>
<ellipse cx="1384.1" cy="263.4" rx="38" ry="20.6" fill="url(#rfade)"/>
<ellipse cx="1384.1" cy="262.2" rx="29" ry="13.4" fill="url(#rsh)"/>
<polygon points="1357.5,230.5 1377.8,219.3 1407.8,225.6 1392.0,239.7" fill="#656565" stroke="#080808" stroke-width="1.1" stroke-linejoin="round"/>
<polygon points="1357.5,230.5 1392.0,239.7 1390.5,273.3 1360.5,260.5" fill="#5f5f5f" stroke="#080808" stroke-width="1.1" stroke-linejoin="round"/>
<polygon points="1392.0,239.7 1407.8,225.6 1405.5,254.9 1390.5,273.3" fill="#595959" stroke="#080808" stroke-width="1.1" stroke-linejoin="round"/>
<path d="M1378,219.6 L1379.4,246.4 L1360.8,260.2 M1379.4,246.4 L1405.2,254.8" fill="none" stroke="#777" stroke-width="0.6" />
<path d="M1349.8,248 L1358.4,246.4 M1353,244.6 L1355.6,249.6" fill="none" stroke="#222" stroke-width="1.3" />
<path d="M1412.4,267 L1423.6,270.6 M1421.2,268.2 L1423.8,270.6 L1421,271.4" fill="none" stroke="#444" stroke-width="0.9" />
<path d="M1356.6,282.4 L1361.4,278.8 L1361.6,274 M1361.4,278.8 L1367.8,276.6" fill="none" stroke="#2a2a2a" stroke-width="2.4" stroke-linecap="round"/>
<path d="M1371.6,252.4 H1374.2 M1372.9,251 V253.8 M1375.2,251 L1377,253.6 L1378.4,250.6 M1377,253.6 V256.6" fill="none" stroke="#f0f0f0" stroke-width="1" />
<path d="M1381.6,228.8 Q1384,229.6 1387.4,227.4 M1383.4,229.6 L1385,228" fill="none" stroke="#e0e0e0" stroke-width="1" />
<path d="M1401.4,245.4 L1400.8,249.4 L1399.4,251" fill="none" stroke="#e0e0e0" stroke-width="1" /></svg>
<span class="t" style="left:1304.00px;top:317px;font-size:12px;line-height:14px;letter-spacing:0.063px;color:#333;">Connections</span>
<span class="t" style="left:1324.40px;top:339px;font-size:12px;line-height:14px;letter-spacing:-0.030px;color:#333;">Arrangement 1-1</span>
<svg class="abs" style="left:1275px;top:315px" width="150" height="66" viewBox="1275 315 150 66"><polygon points="1287.4,320.8 1287.4,326.6 1281.6,326.6" fill="#444"/>
<polygon points="1307.4,342.8 1307.4,348.6 1301.6,348.6" fill="#444"/>
<polygon points="1314,357 1404,357 1419,367.3 1404,377.6 1314,377.6" fill="#f26e21"/>
<path d="M1324.6,367.6 L1327.4,370.4 L1333,363.8" fill="none" stroke="#1a7f1a" stroke-width="1.7"/></svg>
<span class="t" style="left:1339.00px;top:361px;font-size:12px;line-height:14px;letter-spacing:-0.604px;color:#fff;">C 101</span>
<!-- panel -->
<div class="abs" style="left:1439px;top:163px;width:6px;height:1004px;background:#cbcbcb"></div>
<div class="abs" style="left:1445px;top:163px;width:474px;height:25px;background:#f26e21"></div>
<div class="abs" style="left:1919px;top:163px;width:1px;height:1004px;background:#bcbcbc"></div>
<span class="t" style="left:1455.00px;top:169px;font-size:12px;line-height:14px;letter-spacing:-0.404px;color:#fff;font-weight:bold;">C 101</span>
<span class="t" style="left:1496.20px;top:169px;font-size:12px;line-height:14px;letter-spacing:0.185px;color:#fff;">[Connection]</span>
<span class="t" style="left:1781.20px;top:169px;font-size:12px;line-height:14px;letter-spacing:-0.267px;color:#fff;font-weight:bold;">Open</span>
<span class="t" style="left:1831.20px;top:169px;font-size:12px;line-height:14px;letter-spacing:-0.339px;color:#f8b48c;font-weight:bold;">Load update</span>
<span class="t" style="left:1479.20px;top:203px;font-size:12px;line-height:14px;letter-spacing:-0.199px;color:#333;font-weight:bold;">General</span>
<span class="t" style="left:1479.20px;top:335px;font-size:12px;line-height:14px;letter-spacing:-0.336px;color:#333;font-weight:bold;">Grouping</span>
<span class="t" style="left:1479.20px;top:395px;font-size:12px;line-height:14px;letter-spacing:-0.908px;color:#333;font-weight:bold;">Loads</span>
<div class="abs" style="left:1619px;top:224px;width:288px;height:20px;background:#f0f0f0;border:1px solid #d6d6d6;box-sizing:border-box"></div>
<div class="abs" style="left:1619px;top:248px;width:288px;height:20px;background:#f0f0f0;border:1px solid #d6d6d6;box-sizing:border-box"></div>
<div class="abs" style="left:1619px;top:296px;width:288px;height:20px;background:#f0f0f0;border:1px solid #d6d6d6;box-sizing:border-box"></div>
<div class="abs" style="left:1619px;top:356px;width:288px;height:20px;background:#fff;border:1px solid #c6c6c6;box-sizing:border-box"></div>
<div class="abs" style="left:1619px;top:416px;width:288px;height:20px;background:#fff;border:1px solid #c6c6c6;box-sizing:border-box"></div>
<span class="t" style="left:1479.20px;top:228px;font-size:12px;line-height:14px;letter-spacing:-0.103px;color:#333;">Name</span>
<span class="t" style="left:1479.20px;top:252px;font-size:12px;line-height:14px;letter-spacing:0.028px;color:#333;">Node</span>
<span class="t" style="left:1479.20px;top:276px;font-size:12px;line-height:14px;letter-spacing:-0.064px;color:#333;">Connected members</span>
<span class="t" style="left:1479.20px;top:300px;font-size:12px;line-height:14px;letter-spacing:0.197px;color:#333;">Connection point [m]</span>
<span class="t" style="left:1479.20px;top:360px;font-size:12px;line-height:14px;letter-spacing:-0.151px;color:#333;">Group</span>
<span class="t" style="left:1479.20px;top:420px;font-size:12px;line-height:14px;letter-spacing:-0.311px;color:#333;">Result classes for checks</span>
<span class="t" style="left:1624.50px;top:228px;font-size:12px;line-height:14px;letter-spacing:-0.804px;color:#a0a0a0;">C 101</span>
<span class="t" style="left:1624.50px;top:252px;font-size:12px;line-height:14px;letter-spacing:-1.241px;color:#a0a0a0;">101</span>
<span class="t" style="left:1623.40px;top:275px;font-size:12px;line-height:14px;letter-spacing:-0.190px;color:#333;">M7, M14, M21, M27, M34, M40</span>
<span class="t" style="left:1624.50px;top:300px;font-size:12px;line-height:14px;letter-spacing:-0.465px;color:#a0a0a0;">[0.00; 1.40; 2.20]</span>
<span class="t" style="left:1625.50px;top:359px;font-size:12px;line-height:14px;letter-spacing:0.079px;color:#1e1e1e;">No group</span>
<span class="t" style="left:1625.50px;top:419px;font-size:12px;line-height:14px;letter-spacing:-0.417px;color:#1e1e1e;">All ULS Fund</span>
<span class="t" style="left:1457.00px;top:1046px;font-size:12px;line-height:14px;letter-spacing:-0.211px;color:#333;">Analysis</span>
<span class="t" style="left:1586.20px;top:1046px;font-size:12px;line-height:14px;letter-spacing:-0.650px;color:#333;">100.0%</span>
<span class="t" style="left:1457.00px;top:1066px;font-size:12px;line-height:14px;letter-spacing:-0.475px;color:#333;">Plates</span>
<span class="t" style="left:1586.20px;top:1066px;font-size:12px;line-height:14px;letter-spacing:-0.391px;color:#333;">0.4 &lt; 5.0%</span>
<span class="t" style="left:1457.00px;top:1086px;font-size:12px;line-height:14px;letter-spacing:0.070px;color:#333;">Loc. deformation</span>
<span class="t" style="left:1591.80px;top:1086px;font-size:12px;line-height:14px;letter-spacing:-0.313px;color:#333;">0.0 &lt; 3%</span>
<span class="t" style="left:1457.00px;top:1106px;font-size:12px;line-height:14px;letter-spacing:-0.236px;color:#333;">Bolts</span>
<span class="t" style="left:1589.20px;top:1106px;font-size:12px;line-height:14px;letter-spacing:-0.448px;color:#333;">64.3 &lt; 100%</span>
<span class="t" style="left:1457.00px;top:1126px;font-size:12px;line-height:14px;letter-spacing:-0.265px;color:#333;">Welds</span>
<span class="t" style="left:1589.20px;top:1126px;font-size:12px;line-height:14px;letter-spacing:-0.448px;color:#333;">98.1 &lt; 100%</span>
<span class="t" style="left:1457.00px;top:1141px;font-size:12px;line-height:14px;letter-spacing:0.018px;color:#333;">Buckling</span>
<span class="t" style="left:1586.20px;top:1141px;font-size:12px;line-height:14px;letter-spacing:0.018px;color:#333;">Not calculated</span>
<svg class="abs" style="left:1445px;top:190px" width="475" height="977" viewBox="1445 190 475 977"><path d="M1463.2,208.2 L1467.2,212.2 L1471.2,208.2" fill="none" stroke="#f26e21" stroke-width="1.2"/>
<path d="M1463.2,340.2 L1467.2,344.2 L1471.2,340.2" fill="none" stroke="#f26e21" stroke-width="1.2"/>
<path d="M1463.2,400.2 L1467.2,404.2 L1471.2,400.2" fill="none" stroke="#f26e21" stroke-width="1.2"/>
<path d="M1893.2,364.0 L1897.2,368.0 L1901.2,364.0" fill="none" stroke="#222" stroke-width="1.3"/>
<path d="M1893.2,423.8 L1897.2,427.8 L1901.2,423.8" fill="none" stroke="#222" stroke-width="1.3"/>
<path d="M1893.5,275.4 V286.9 L1896,284.7 L1897.9,289.5 L1899.5,288.8 L1897.6,284.1 L1901.6,283.7 Z" fill="#fff" stroke="#000" stroke-width="1"/>
<polygon points="1559.1,1052.9 1561.6,1050.1 1564.7,1053.0 1572.2,1042.9 1575.0,1045.2 1564.4,1058.0" fill="#008000"/>
<polygon points="1559.1,1072.9 1561.6,1070.1 1564.7,1073.0 1572.2,1062.9 1575.0,1065.2 1564.4,1078.0" fill="#008000"/>
<polygon points="1559.1,1092.9 1561.6,1090.1 1564.7,1093.0 1572.2,1082.9 1575.0,1085.2 1564.4,1098.0" fill="#008000"/>
<polygon points="1559.1,1112.9 1561.6,1110.1 1564.7,1113.0 1572.2,1102.9 1575.0,1105.2 1564.4,1118.0" fill="#008000"/>
<polygon points="1559.1,1132.9 1561.6,1130.1 1564.7,1133.0 1572.2,1122.9 1575.0,1125.2 1564.4,1138.0" fill="#008000"/></svg>
<svg class="abs" style="left:1520px;top:620px" width="320" height="290" viewBox="1520 620 320 290"><defs>
<pattern id="mesh" width="2.4" height="2.4" patternUnits="userSpaceOnUse" patternTransform="rotate(35)"><rect width="2.4" height="2.4" fill="#9fbfe8"/><path d="M0,0 H2.4 M0,0 V2.4" stroke="#6f95cc" stroke-width="0.8"/></pattern>
<linearGradient id="pw" gradientUnits="userSpaceOnUse" x1="1660" y1="700" x2="1650" y2="770"><stop offset="0" stop-color="#6886b0"/><stop offset="1" stop-color="#6f8eb8"/></linearGradient>
<linearGradient id="tb1" gradientUnits="userSpaceOnUse" x1="1612" y1="748" x2="1624" y2="780"><stop offset="0" stop-color="#a9c6ee"/><stop offset="0.4" stop-color="#97b8e6"/><stop offset="1" stop-color="#7c9ed0"/></linearGradient>
<linearGradient id="tb2" gradientUnits="userSpaceOnUse" x1="1716" y1="692" x2="1736" y2="716"><stop offset="0" stop-color="#a6c4ec"/><stop offset="0.45" stop-color="#8cadda"/><stop offset="1" stop-color="#5f84b8"/></linearGradient>
</defs>
<line x1="1545.3" y1="804.8" x2="1600.0" y2="774.0" stroke="#cfdcf2" stroke-width="1" stroke-dasharray="4 2 1 2"/>
<line x1="1776.0" y1="798.7" x2="1824.0" y2="825.3" stroke="#cfdcf2" stroke-width="1" stroke-dasharray="4 2 1 2"/>
<line x1="1663.2" y1="849.3" x2="1663.2" y2="901.3" stroke="#cfdcf2" stroke-width="1" stroke-dasharray="4 2 1 2"/>
<path d="M1702.7,700.7 L1728,686 Q1737.4,686.4 1741.6,694 Q1745.6,704 1740,713.3 L1722,723 L1704,712 Z" fill="url(#tb2)"/>
<path d="M1702.7,700.7 L1728,686 Q1737.4,686.4 1741.6,694 Q1745.6,704 1740,713.3 L1722,723 L1704,712 Z" fill="url(#mesh)" opacity="0.55"/>
<polygon points="1744.0,732.0 1757.4,732.0 1759.4,738.8 1752.0,736.4" fill="#a9c6ee" />
<polygon points="1689.3,695.6 1691.4,695.4 1713.4,708.0 1714.8,715.4 1714.8,720.0 1690.4,706.0" fill="#2b3f8c" />
<polygon points="1732.4,724.4 1734.4,721.6 1736.0,726.4" fill="#2b3f8c" />
<polygon points="1631.0,770.0 1634.3,772.0 1634.3,834.6 1631.0,833.3" fill="#7b9bc8" />
<polygon points="1634.2,772.0 1643.9,778.0 1643.9,829.7 1634.2,834.4" fill="#3b4d66" />
<polygon points="1643.8,778.0 1670.1,790.0 1670.1,848.6 1643.8,829.7" fill="#6a87af" />
<polygon points="1670.0,788.0 1674.2,790.0 1674.2,864.0 1671.3,864.8 1670.0,850.0" fill="#7d9ecb" />
<polygon points="1674.1,790.0 1695.9,800.0 1695.9,852.6 1674.1,864.0" fill="#3a4a61" />
<polygon points="1558.0,714.6 1776.0,832.0 1792.0,824.0 1762.8,841.4 1545.0,722.6" fill="#85a7d6" />
<polygon points="1545.0,722.4 1762.8,841.2 1762.8,845.4 1545.0,726.4" fill="#7193c2" />
<polygon points="1762.8,841.2 1792.0,823.8 1792.0,828.0 1762.8,845.4" fill="#93b4e2" />
<polygon points="1551.4,660.0 1757.0,772.0 1768.0,764.0 1776.4,832.4 1558.0,715.0" fill="url(#pw)" />
<polygon points="1766.4,765.4 1769.4,763.0 1777.4,831.6 1774.6,833.0" fill="#9cbbe6" />
<polygon points="1564.0,635.4 1782.0,753.2 1754.8,770.6 1534.6,652.0" fill="#82a4d3" />
<polygon points="1534.6,651.8 1754.8,770.4 1754.8,774.8 1534.6,656.0" fill="#7092c0" />
<polygon points="1754.8,770.4 1782.0,753.0 1782.0,757.2 1754.8,774.8" fill="#93b4e2" />
<polygon points="1620.8,733.0 1634.0,739.4 1645.8,735.8 1672.5,748.4 1649.4,760.0 1649.4,776.0 1630.6,767.0 1621.4,749.4" fill="#2c3f90" />
<polygon points="1630.8,774.6 1669.2,794.0 1668.4,796.2 1630.0,776.8" fill="#2e3f7a" />
<polygon points="1650.8,733.2 1672.9,745.0 1671.8,748.4 1650.0,735.9" fill="#f2c31a" />
<path d="M1604,755.6 L1627,742.4 Q1638,744 1642,757 Q1643.6,766 1641.6,771 L1611,785.8 Z" fill="url(#tb1)"/>
<path d="M1604,755.6 L1627,742.4 Q1638,744 1642,757 Q1643.6,766 1641.6,771 L1611,785.8 Z" fill="url(#mesh)" opacity="0.6"/>
<ellipse cx="1604.6" cy="770" rx="9.4" ry="15.6" fill="#a9c6ee" transform="rotate(-20 1604.6 770)"/>
<ellipse cx="1605" cy="770.4" rx="6.6" ry="12" fill="#86a7d6" transform="rotate(-20 1605 770.4)"/>
<ellipse cx="1605" cy="770.4" rx="6.6" ry="12" fill="url(#mesh)" opacity="0.5" transform="rotate(-20 1605 770.4)"/>
<path d="M1624.6,741.4 Q1635,741.6 1641,750.4 Q1646.4,760 1644.8,766.4 Q1643.4,770.4 1640.4,771.8" fill="none" stroke="#f2c31a" stroke-width="3.4"/>
<ellipse cx="1649.4" cy="745.4" rx="4.8" ry="4" fill="#e9b90f"/>
<ellipse cx="1649.4" cy="743.0" rx="3.2" ry="2.6" fill="#f7d23a"/>
<ellipse cx="1664.8" cy="778.8" rx="4.8" ry="4" fill="#e9b90f"/>
<ellipse cx="1664.8" cy="776.4" rx="3.2" ry="2.6" fill="#f7d23a"/></svg>
<div class="abs" style="left:0;top:1167px;width:1920px;height:1px;background:#b0b0b0"></div>
<div class="abs" style="left:0;top:1168px;width:1920px;height:32px;background:#000"></div>
<span class="t" style="left:15.50px;top:1177px;font-size:12px;line-height:14px;letter-spacing:-0.295px;color:#fff;">Design code:</span>
<span class="t" style="left:88.00px;top:1177px;font-size:12px;line-height:14px;letter-spacing:-0.835px;color:#fff;font-weight:bold;">EN</span>
<span class="t" style="left:1793.00px;top:1177px;font-size:12px;line-height:14px;letter-spacing:-0.140px;color:#fff;">Tekla Structures</span>
<svg class="abs" style="left:1884px;top:1172px" width="24" height="24" viewBox="1884 1172 24 24">
<g transform="rotate(-45 1895 1184.2)" fill="#fff">
<path d="M1895.7,1180.5 A5.3,3.7 0 0 1 1895.7,1187.9 Z"/>
<path d="M1894.3,1180.5 A5.3,3.7 0 0 0 1894.3,1187.9 Z"/>
<rect x="1900.4" y="1183.4" width="5.2" height="1.6" rx="0.8"/>
<rect x="1884.4" y="1183.4" width="5.2" height="1.6" rx="0.8"/>
</g>
</svg>
</div>
</body></html>
